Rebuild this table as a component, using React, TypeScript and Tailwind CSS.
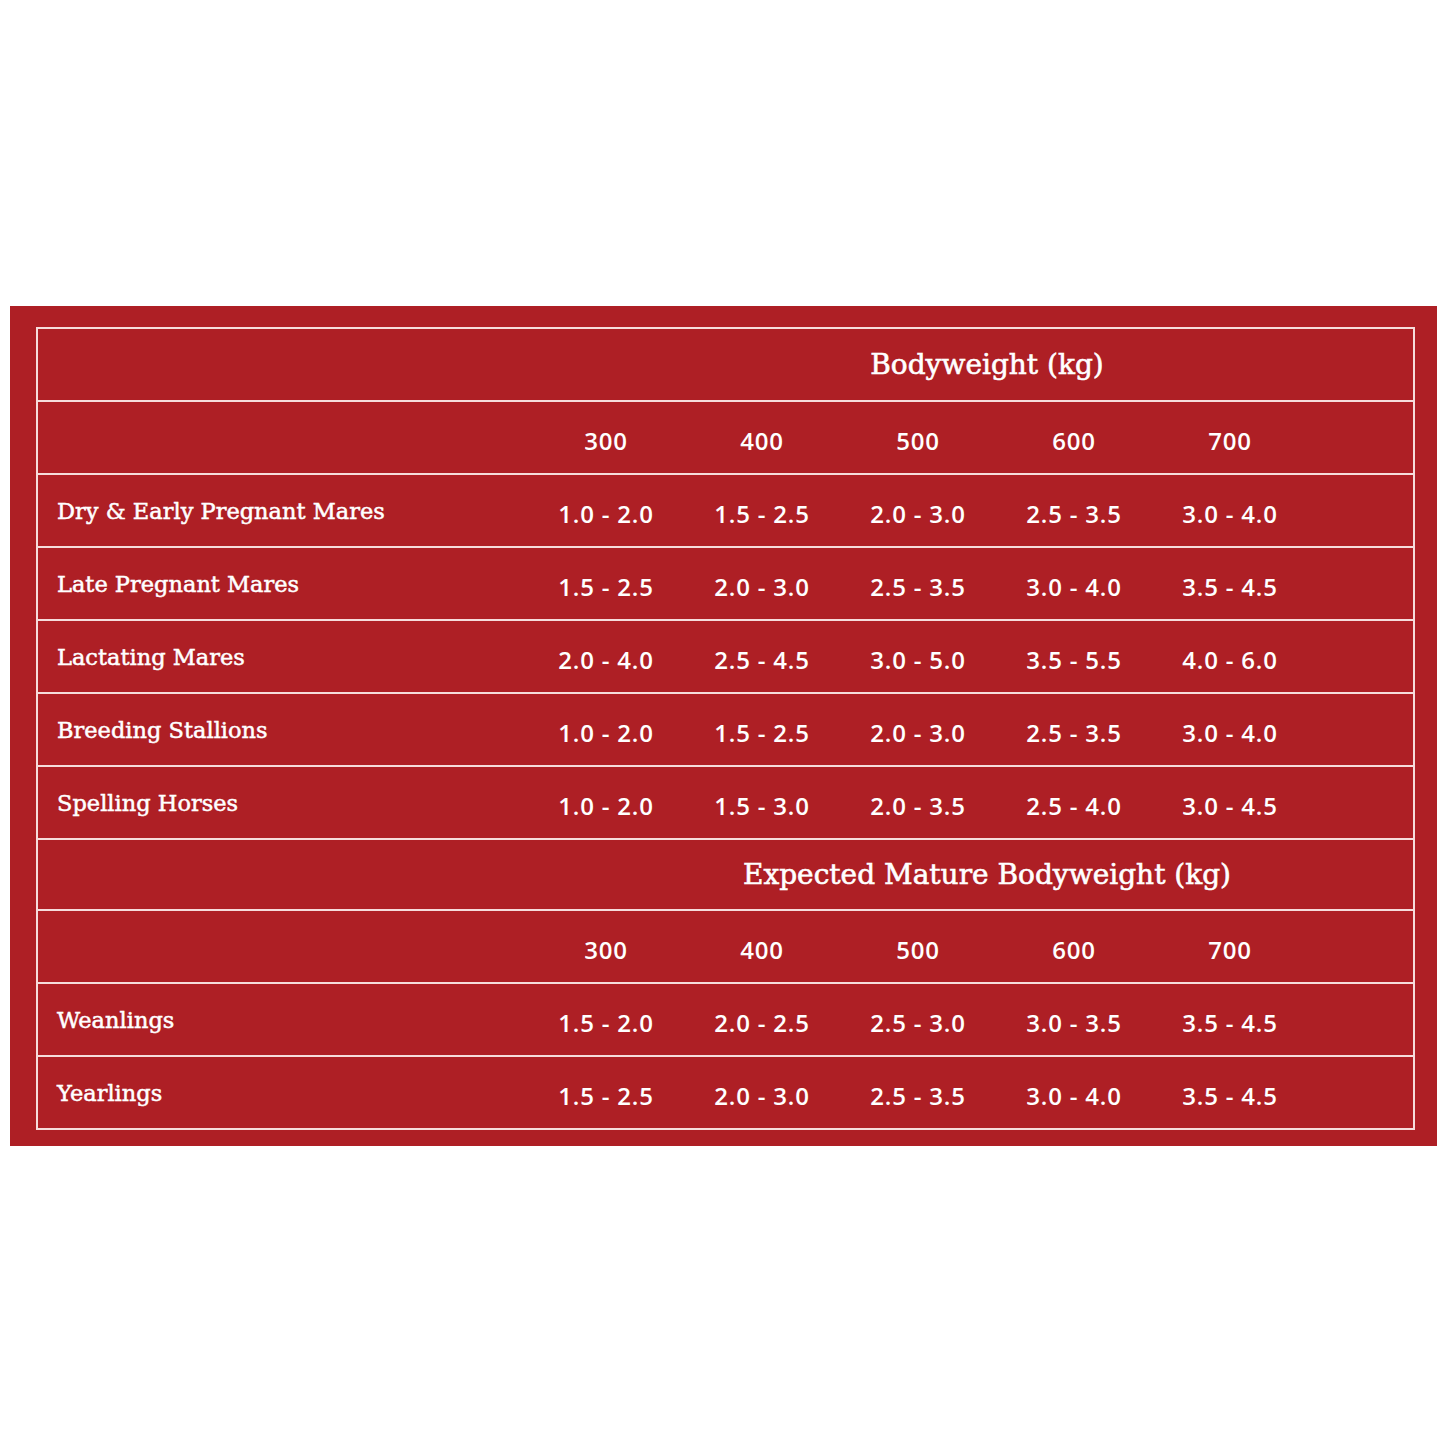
import React from "react";

const cols = ["300", "400", "500", "600", "700"];

const rows1: [string, string[]][] = [
  ["Dry & Early Pregnant Mares", ["1.0 - 2.0", "1.5 - 2.5", "2.0 - 3.0", "2.5 - 3.5", "3.0 - 4.0"]],
  ["Late Pregnant Mares", ["1.5 - 2.5", "2.0 - 3.0", "2.5 - 3.5", "3.0 - 4.0", "3.5 - 4.5"]],
  ["Lactating Mares", ["2.0 - 4.0", "2.5 - 4.5", "3.0 - 5.0", "3.5 - 5.5", "4.0 - 6.0"]],
  ["Breeding Stallions", ["1.0 - 2.0", "1.5 - 2.5", "2.0 - 3.0", "2.5 - 3.5", "3.0 - 4.0"]],
  ["Spelling Horses", ["1.0 - 2.0", "1.5 - 3.0", "2.0 - 3.5", "2.5 - 4.0", "3.0 - 4.5"]],
];

const rows2: [string, string[]][] = [
  ["Weanlings", ["1.5 - 2.0", "2.0 - 2.5", "2.5 - 3.0", "3.0 - 3.5", "3.5 - 4.5"]],
  ["Yearlings", ["1.5 - 2.5", "2.0 - 3.0", "2.5 - 3.5", "3.0 - 4.0", "3.5 - 4.5"]],
];

const serif = "font-['DejaVu_Serif',serif]";
const sans = "font-['Open_Sans',sans-serif]";

function Header({ text, first }: { text: string; first?: boolean }) {
  return (
    <div className={`flex h-[71px] items-center ${first ? "" : "border-t-2 border-[#f6dcdc]"}`}>
      <div className="w-[523px] shrink-0" />
      <div className={`flex-1 text-center text-[28px] text-white [-webkit-text-stroke:0.6px_white] ${serif}`}>{text}</div>
    </div>
  );
}

function ColRow() {
  return (
    <div className="flex h-[73px] items-center border-t-2 border-[#f6dcdc] pt-[6px]">
      <div className="w-[490px] shrink-0" />
      {cols.map((c) => (
        <div key={c} className={`w-[156px] text-center text-[24px] font-semibold tracking-[0.8px] text-white ${sans}`}>
          {c}
        </div>
      ))}
    </div>
  );
}

function DataRow({ label, vals }: { label: string; vals: string[] }) {
  return (
    <div className="flex h-[73px] items-center border-t-2 border-[#f6dcdc]">
      <div className={`w-[490px] shrink-0 pl-[19px] pt-[2px] text-[22.5px] text-white [-webkit-text-stroke:0.5px_white] ${serif}`}>{label}</div>
      {vals.map((v, i) => (
        <div key={i} className={`w-[156px] pt-[7px] text-center text-[24px] font-semibold tracking-[0.8px] text-white ${sans}`}>
          {v}
        </div>
      ))}
    </div>
  );
}

export default function App() {
  return (
    <div className="min-h-[1445px] w-[1445px] bg-white pt-[306px]">
      <div className="ml-[10px] w-[1427px] bg-[#ae1f25] pb-[16px] pl-[26px] pr-[22px] pt-[21px]">
        <div className="border-2 border-[#f6dcdc]">
          <Header text="Bodyweight (kg)" first />
          <ColRow />
          {rows1.map(([l, v]) => (
            <DataRow key={l} label={l} vals={v} />
          ))}
          <Header text="Expected Mature Bodyweight (kg)" />
          <ColRow />
          {rows2.map(([l, v]) => (
            <DataRow key={l} label={l} vals={v} />
          ))}
        </div>
      </div>
    </div>
  );
}
